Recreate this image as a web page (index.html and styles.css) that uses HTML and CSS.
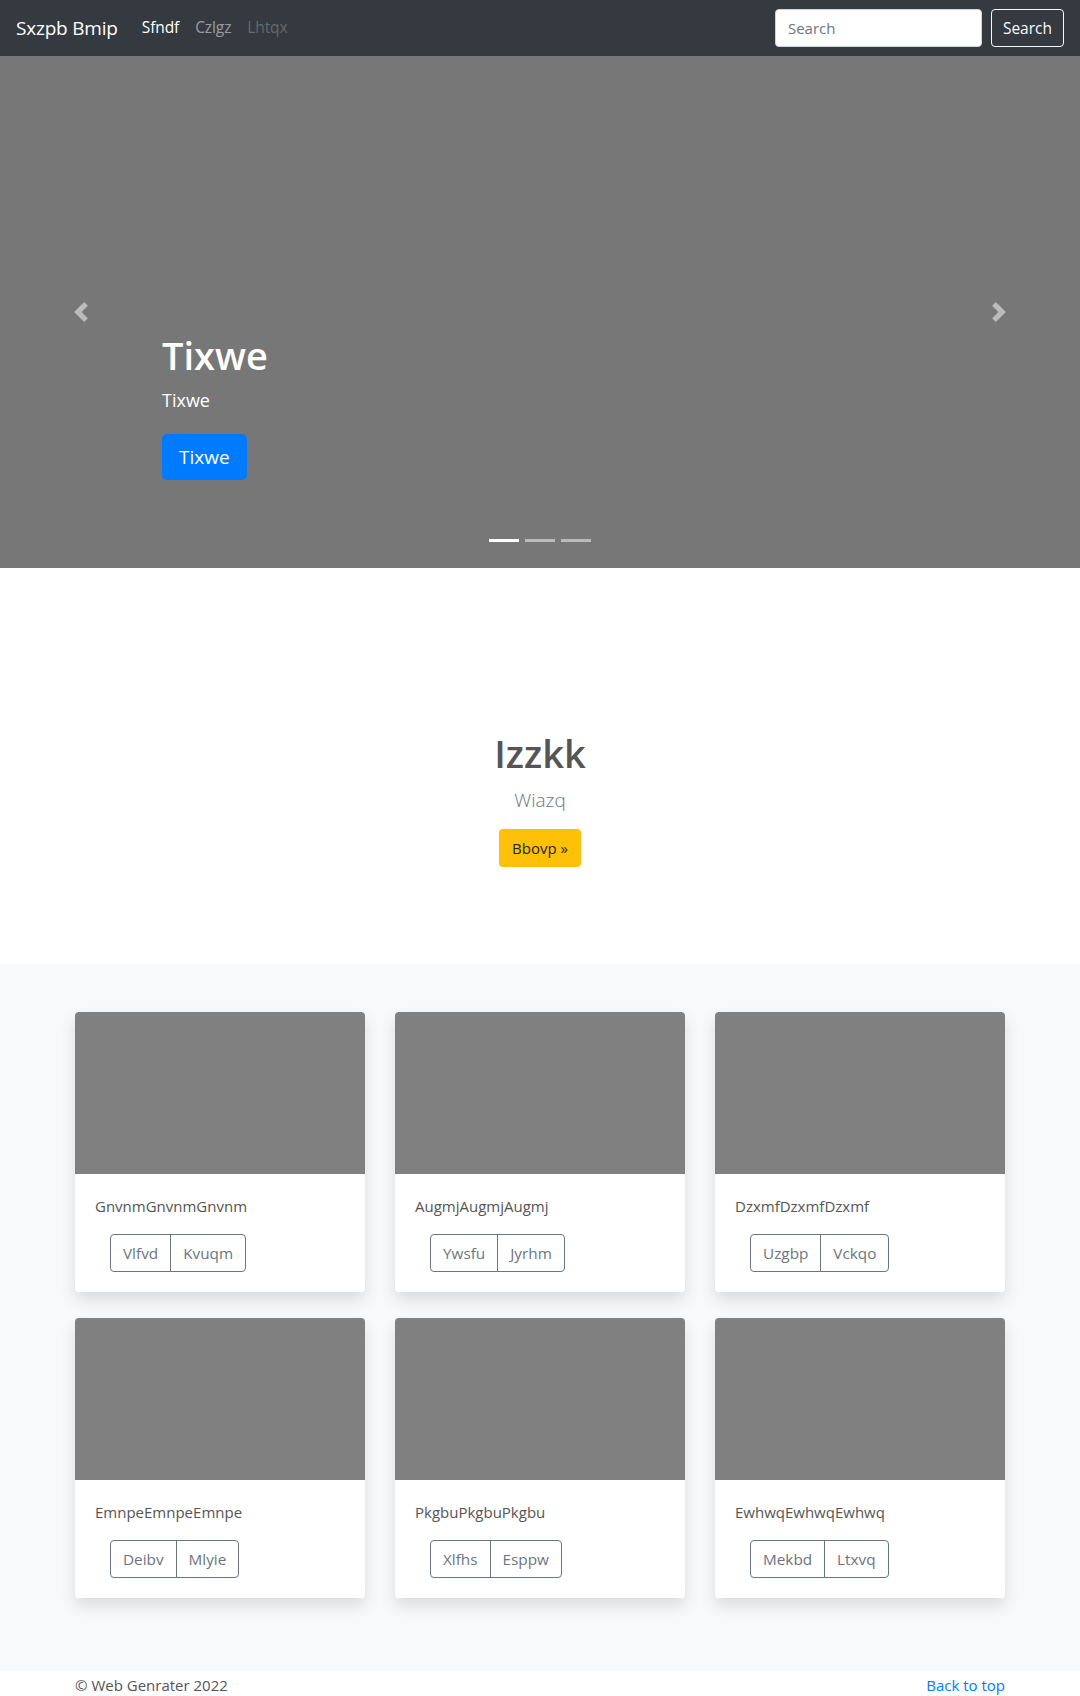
FILE: index.html
```html
<!DOCTYPE html>
<html lang="en">
<head>
<meta charset="utf-8">
<title>Sxzpb Bmip</title>
<link rel="stylesheet" href="styles.css">
</head>
<body>
<header class="navbar">
  <a class="brand" href="#">Sxzpb Bmip</a>
  <nav class="nav">
    <a class="nav-link active" href="#">Sfndf</a>
    <a class="nav-link" href="#">Czlgz</a>
    <a class="nav-link disabled" href="#">Lhtqx</a>
  </nav>
  <form class="search">
    <input class="search-input" type="text" placeholder="Search">
    <button class="search-btn" type="button">Search</button>
  </form>
</header>

<section class="carousel">
  <a class="control prev" href="#"><svg width="20" height="20" viewBox="0 0 8 8"><path fill="#fff" d="M5.25 0l-4 4 4 4 1.5-1.5L4.25 4l2.5-2.5L5.25 0z"/></svg></a>
  <a class="control next" href="#"><svg width="20" height="20" viewBox="0 0 8 8"><path fill="#fff" d="M2.75 0l-1.5 1.5L3.75 4l-2.5 2.5L2.75 8l4-4-4-4z"/></svg></a>
  <div class="caption">
    <h1 class="caption-title">Tixwe</h1>
    <p class="caption-text">Tixwe</p>
    <p class="caption-action"><a class="btn-primary" href="#">Tixwe</a></p>
  </div>
  <ol class="indicators">
    <li class="active"></li>
    <li></li>
    <li></li>
  </ol>
</section>

<section class="jumbo">
  <h1 class="jumbo-title">Izzkk</h1>
  <p class="lead">Wiazq</p>
  <p><a class="btn-warning" href="#">Bbovp »</a></p>
</section>

<section class="album">
  <div class="grid">
    <div class="card"><div class="thumb"></div><div class="card-body"><p class="card-text">GnvnmGnvnmGnvnm</p><div class="btn-group"><a class="btn-outline" href="#">Vlfvd</a><a class="btn-outline" href="#">Kvuqm</a></div></div></div>
    <div class="card"><div class="thumb"></div><div class="card-body"><p class="card-text">AugmjAugmjAugmj</p><div class="btn-group"><a class="btn-outline" href="#">Ywsfu</a><a class="btn-outline" href="#">Jyrhm</a></div></div></div>
    <div class="card"><div class="thumb"></div><div class="card-body"><p class="card-text">DzxmfDzxmfDzxmf</p><div class="btn-group"><a class="btn-outline" href="#">Uzgbp</a><a class="btn-outline" href="#">Vckqo</a></div></div></div>
    <div class="card"><div class="thumb"></div><div class="card-body"><p class="card-text">EmnpeEmnpeEmnpe</p><div class="btn-group"><a class="btn-outline" href="#">Deibv</a><a class="btn-outline" href="#">Mlyie</a></div></div></div>
    <div class="card"><div class="thumb"></div><div class="card-body"><p class="card-text">PkgbuPkgbuPkgbu</p><div class="btn-group"><a class="btn-outline" href="#">Xlfhs</a><a class="btn-outline" href="#">Esppw</a></div></div></div>
    <div class="card"><div class="thumb"></div><div class="card-body"><p class="card-text">EwhwqEwhwqEwhwq</p><div class="btn-group"><a class="btn-outline" href="#">Mekbd</a><a class="btn-outline" href="#">Ltxvq</a></div></div></div>
  </div>
</section>

<footer class="footer">
  <span class="copy">© Web Genrater 2022</span>
  <a class="top-link" href="#">Back to top</a>
</footer>
</body>
</html>
```

FILE: styles.css
```css
* { box-sizing: border-box; }
html, body { margin: 0; padding: 0; }
body {
  font-family: "Open Sans", "Noto Sans", "Liberation Sans", sans-serif;
  font-size: 16px;
  line-height: 1.5;
  color: #555;
  background: #fff;
}
a { text-decoration: none; }
p { margin: 0; }
h1 { margin: 0; font-weight: 500; }

/* navbar */
.navbar {
  height: 56px;
  background: #343a40;
  display: flex;
  align-items: center;
  padding: 0 16px;
}
.brand {
  color: #fff;
  font-size: 19px;
  line-height: 30px;
  margin-right: 16px;
  letter-spacing: -0.2px;
}
.nav { display: flex; flex: 1; }
.nav-link {
  padding: 8px 8px;
  font-size: 15.5px;
  color: rgba(255,255,255,.5);
  letter-spacing: -0.1px;
}
.nav-link.active { color: #fff; }
.nav-link.disabled { color: rgba(255,255,255,.25); }
.search { display: flex; align-items: center; }
.search-input {
  width: 207px;
  height: 38px;
  border: 1px solid #ced4da;
  border-radius: 4px;
  padding: 6px 12px;
  font-family: inherit;
  font-size: 15px;
  color: #495057;
  background: #fff;
  margin-right: 9px;
}
.search-input::placeholder { color: #6c757d; }
.search-btn {
  height: 38px;
  padding: 6px 11px;
  border: 1px solid #f8f9fa;
  border-radius: 4px;
  background: transparent;
  color: #f8f9fa;
  font-family: inherit;
  font-size: 15.5px;
}

/* carousel */
.carousel {
  position: relative;
  height: 512px;
  background: #777;
}
.control {
  position: absolute;
  top: 0;
  bottom: 0;
  width: 15%;
  display: flex;
  align-items: center;
  justify-content: center;
  opacity: .5;
}
.control.prev { left: 0; }
.control.next { right: 0; }
.caption {
  position: absolute;
  left: 15%;
  right: 15%;
  bottom: 88px;
  color: #fff;
}
.caption-title {
  font-size: 38px;
  line-height: 48px;
  font-weight: 600;
  margin-bottom: 8px;
}
.caption-text {
  font-size: 18px;
  line-height: 27px;
  margin-bottom: 20px;
}
.btn-primary {
  display: inline-block;
  background: #007bff;
  color: #fff;
  font-size: 19px;
  line-height: 30px;
  padding: 8px 17px;
  border-radius: 5px;
}
.indicators {
  position: absolute;
  left: 0;
  right: 0;
  bottom: 26px;
  margin: 0;
  padding: 0;
  list-style: none;
  display: flex;
  justify-content: center;
  gap: 6px;
}
.indicators li {
  width: 30px;
  height: 3px;
  background: #fff;
  opacity: .5;
}
.indicators li.active { opacity: 1; }

/* jumbotron */
.jumbo {
  text-align: center;
  padding: 161px 0 97px;
}
.jumbo-title {
  font-size: 38px;
  line-height: 48px;
  font-weight: 600;
  color: #555;
  margin-bottom: 8px;
}
.lead {
  font-size: 19px;
  line-height: 30px;
  font-weight: 300;
  color: #6c757d;
  margin-bottom: 14px;
}
.btn-warning {
  display: inline-block;
  background: #ffc107;
  color: #212529;
  font-size: 15px;
  line-height: 24px;
  padding: 7px 13px;
  border-radius: 4px;
}

/* album */
.album {
  background: #f8f9fa;
  padding: 48px 0 73px;
}
.grid {
  width: 930px;
  margin: 0 auto;
  display: grid;
  grid-template-columns: repeat(3, 290px);
  column-gap: 30px;
  row-gap: 26px;
}
.card {
  background: #fff;
  border-radius: 4px;
  overflow: hidden;
  box-shadow: 0 8px 16px rgba(0,0,0,.12);
}
.thumb {
  height: 162px;
  background: #808080;
}
.card-body {
  padding: 20px 20px 20px;
}
.card-text {
  font-size: 15px;
  line-height: 24px;
  margin-bottom: 16px;
  color: #555;
}
.btn-group {
  display: inline-flex;
  margin-left: 15px;
}
.btn-outline {
  display: inline-block;
  border: 1px solid #6c757d;
  color: #6c757d;
  font-size: 15.3px;
  line-height: 24px;
  padding: 6px 12px;
}
.btn-outline:first-child { border-radius: 4px 0 0 4px; }
.btn-outline:last-child { border-radius: 0 4px 4px 0; margin-left: -1px; }

/* footer */
.footer {
  width: 930px;
  margin: 0 auto;
  display: flex;
  justify-content: space-between;
  font-size: 15px;
  line-height: 24px;
  padding-top: 2px;
}
.copy { color: #555; }
.top-link { color: #007bff; }
```
